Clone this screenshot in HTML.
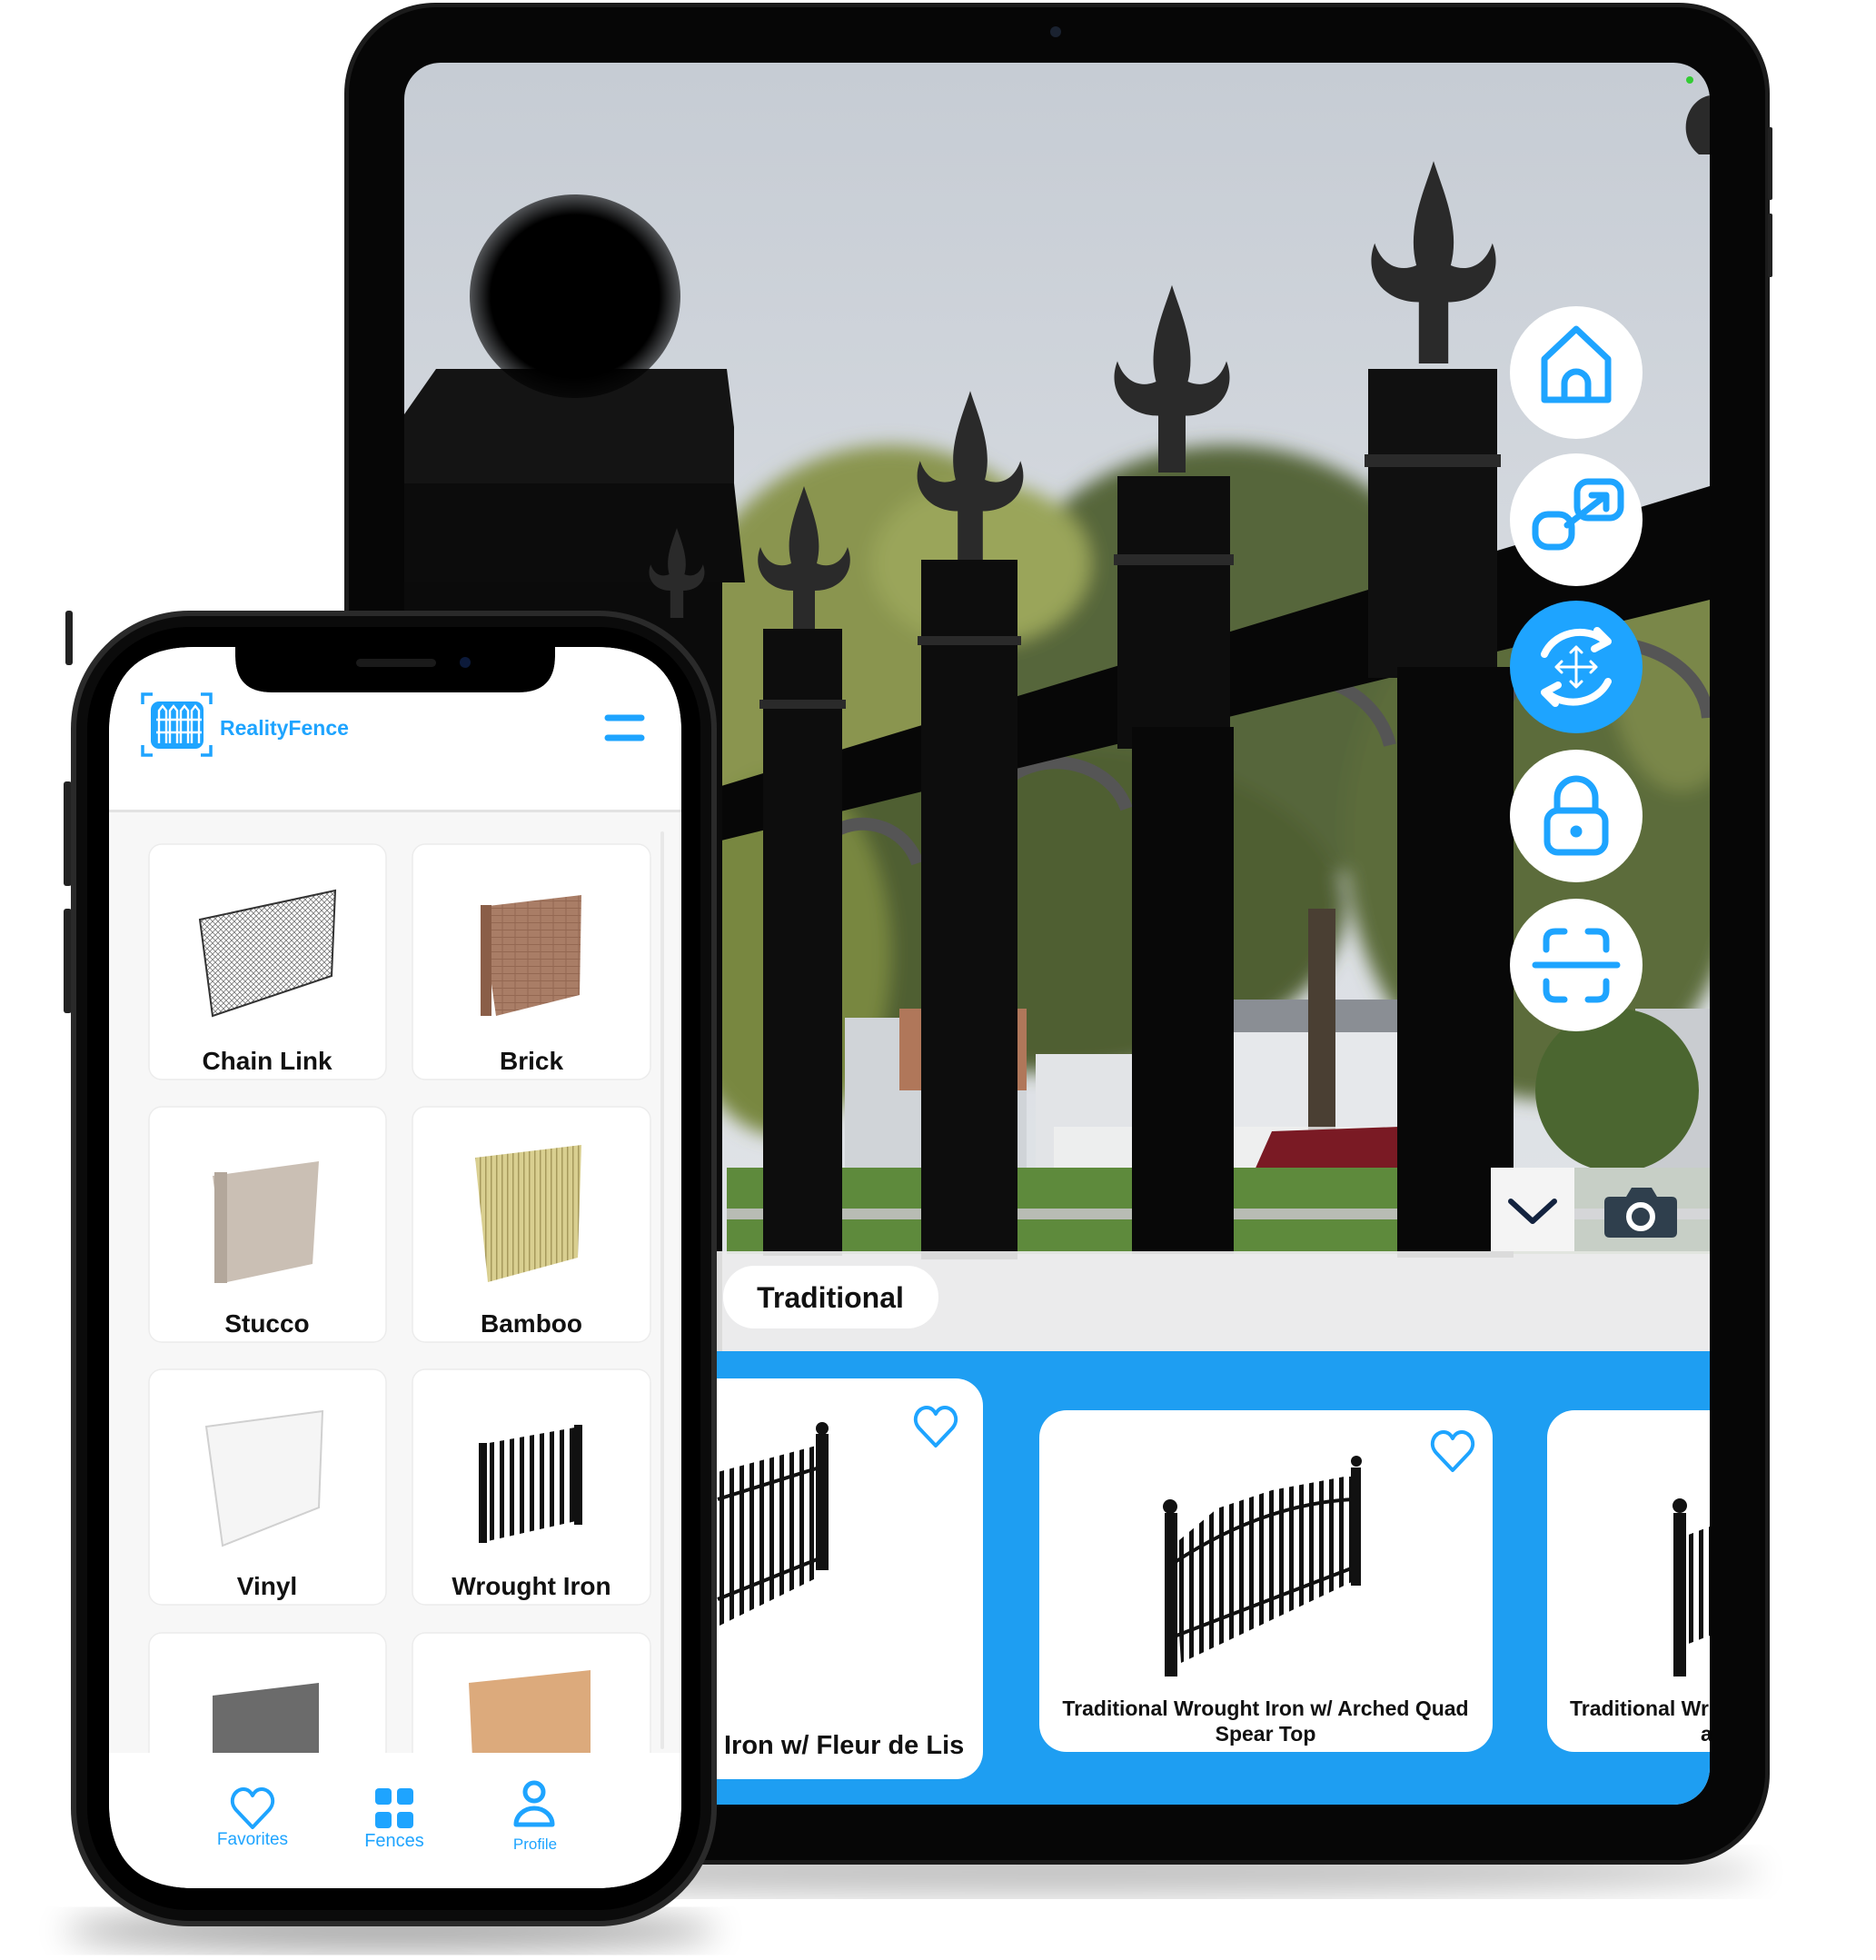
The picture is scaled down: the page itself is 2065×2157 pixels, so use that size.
<!DOCTYPE html>
<html><head><meta charset="utf-8"><style>
html,body{margin:0;padding:0;background:#fff;}
svg{display:block}
text{font-family:"Liberation Sans",sans-serif;}
</style></head><body>
<svg width="2065" height="2157" viewBox="0 0 2065 2157" xmlns="http://www.w3.org/2000/svg">
<defs>
<clipPath id="ipadScr"><rect x="445" y="69" width="1437" height="1917" rx="40"/></clipPath>
<clipPath id="phoneScr"><path d="M215 712 H259 V722 Q259 762 299 762 H571 Q611 762 611 722 V712 H655 Q750 712 750 807 V1983 Q750 2078 655 2078 H215 Q120 2078 120 1983 V807 Q120 712 215 712 Z"/></clipPath>
<linearGradient id="sky" x1="0" y1="0" x2="0" y2="1">
<stop offset="0" stop-color="#c6ccd4"/><stop offset="0.4" stop-color="#dadee3"/><stop offset="1" stop-color="#e6e8eb"/></linearGradient>
<radialGradient id="ball" cx="0.5" cy="0.5" r="0.5"><stop offset="0.8" stop-color="#000"/><stop offset="1" stop-color="#000" stop-opacity="0.6"/></radialGradient>
<pattern id="bars" width="11" height="20" patternUnits="userSpaceOnUse"><rect width="5" height="20" fill="#111"/></pattern>
<pattern id="mesh" width="6" height="6" patternUnits="userSpaceOnUse"><path d="M0 0L6 6M6 0L0 6" stroke="#777" stroke-width="0.8"/></pattern>
<pattern id="bamboo" width="6" height="20" patternUnits="userSpaceOnUse"><rect width="6" height="20" fill="#d9cf90"/><rect width="1.5" height="20" fill="#a69a5c"/></pattern>
<pattern id="brick" width="14" height="8" patternUnits="userSpaceOnUse"><rect width="14" height="8" fill="#a97d66"/><path d="M0 7.5H14M7 0V7.5" stroke="#946852" stroke-width="1"/></pattern>
<g id="fin"><path d="M-12,0 L-12,-50 C-40,-50 -58,-72 -48,-98 C-42,-80 -28,-74 -14,-80 C-22,-110 -8,-140 0,-165 C8,-140 22,-110 14,-80 C28,-74 42,-80 48,-98 C58,-72 40,-50 12,-50 L12,0 Z" fill="#2a2a2a"/></g>
<path id="heart" d="M25 46 L7 27 C-2 17 5 4 15 4 C20 4 23 7 25 11 C27 7 30 4 35 4 C45 4 52 17 43 27 Z" fill="none" stroke="#1ea4ff" stroke-width="4" stroke-linejoin="round"/>
<filter id="blur"><feGaussianBlur stdDeviation="18"/></filter>
<filter id="soft"><feGaussianBlur stdDeviation="10"/></filter>
</defs>

<ellipse cx="1160" cy="2060" rx="780" ry="25" fill="#000" opacity="0.25" filter="url(#blur)"/>
<ellipse cx="430" cy="2125" rx="360" ry="22" fill="#000" opacity="0.35" filter="url(#blur)"/>

<rect x="379" y="3" width="1569" height="2049" rx="100" fill="#1b1b1b"/>
<rect x="384" y="8" width="1559" height="2039" rx="96" fill="#060606"/>
<rect x="1946" y="140" width="5" height="80" rx="2" fill="#222"/>
<rect x="1946" y="235" width="5" height="70" rx="2" fill="#222"/>
<circle cx="1162" cy="35" r="6" fill="#1a2230"/>
<g clip-path="url(#ipadScr)">
<rect x="445" y="69" width="1437" height="1917" fill="url(#sky)"/>
<g filter="url(#soft)">
<ellipse cx="980" cy="780" rx="250" ry="290" fill="#8a9550"/>
<ellipse cx="1350" cy="740" rx="270" ry="250" fill="#56663a"/>
<ellipse cx="1700" cy="920" rx="220" ry="290" fill="#5c6c3a"/>
<ellipse cx="1150" cy="1000" rx="330" ry="180" fill="#4f5e33"/>
<ellipse cx="860" cy="1050" rx="120" ry="200" fill="#78873f"/>
<ellipse cx="1850" cy="720" rx="80" ry="150" fill="#7a874a"/>
<ellipse cx="1080" cy="620" rx="120" ry="90" fill="#9aa55a"/>
</g>
<rect x="930" y="1120" width="200" height="170" fill="#d0d4d8"/>
<rect x="990" y="1110" width="140" height="90" fill="#b0775a"/>
<rect x="1140" y="1160" width="180" height="130" fill="#e2e4e7"/>
<rect x="1340" y="1130" width="240" height="160" fill="#e6e8eb"/>
<rect x="1320" y="1100" width="260" height="36" fill="#8a8e94"/>
<rect x="1800" y="1110" width="82" height="180" fill="#c9ccd0"/>
<ellipse cx="1780" cy="1200" rx="90" ry="90" fill="#4b6630"/>
<rect x="1440" y="1000" width="30" height="290" fill="#4a3f33"/>
<rect x="1160" y="1240" width="400" height="50" fill="#f0f0f0" opacity="0.8"/>
<path d="M1380 1290 L1400 1245 L1540 1240 L1565 1290 Z" fill="#7a1a24"/>
<rect x="800" y="1285" width="1082" height="95" fill="#5e8a3c"/>
<rect x="800" y="1330" width="1082" height="12" fill="#b8bcb4"/>
<g fill="none" stroke="#555" stroke-width="14">
<path d="M890 990 A60 60 0 0 1 1010 950"/>
<path d="M1085 930 A80 70 0 0 1 1240 890"/>
<path d="M1320 860 A90 80 0 0 1 1530 820"/>
<path d="M1655 800 A90 70 0 0 1 1880 790"/>
</g>
<polygon points="794,865 1882,535 1882,660 794,925" fill="#070707"/>
<polygon points="445,456 480,406 800,406 808,470 808,532 445,532" fill="#141414"/>
<polygon points="445,532 808,532 820,641 445,641" fill="#0c0c0c"/>
<rect x="445" y="641" width="350" height="900" fill="#0b0b0b"/>
<ellipse cx="633" cy="326" rx="116" ry="112" fill="url(#ball)"/>
<use href="#fin" transform="translate(745,680) scale(0.6)"/>
<use href="#fin" transform="translate(885,700) scale(1.0)"/>
<rect x="840" y="692" width="87" height="690" fill="#0d0d0d"/>
<rect x="836" y="770" width="95" height="10" fill="#2a2a2a"/>
<use href="#fin" transform="translate(1068,620) scale(1.15)"/>
<rect x="1014" y="616" width="106" height="770" fill="#0d0d0d"/>
<rect x="1010" y="700" width="114" height="10" fill="#2a2a2a"/>
<use href="#fin" transform="translate(1290,520) scale(1.25)"/>
<rect x="1230" y="524" width="124" height="300" fill="#0d0d0d"/>
<rect x="1246" y="800" width="112" height="580" fill="#080808"/>
<rect x="1226" y="610" width="132" height="12" fill="#2a2a2a"/>
<use href="#fin" transform="translate(1578,400) scale(1.35)"/>
<rect x="1506" y="406" width="142" height="340" fill="#101010"/>
<rect x="1538" y="734" width="128" height="650" fill="#080808"/>
<rect x="1502" y="500" width="150" height="14" fill="#2a2a2a"/>
<path d="M1882 105 C1855 110 1845 150 1870 170 L1882 170 Z" fill="#2a2a2a"/>
<rect x="445" y="1377" width="1437" height="110" fill="#ececec" opacity="0.93"/>
<rect x="445" y="1487" width="1437" height="500" fill="#1e9ef2"/>
<rect x="1641" y="1285" width="92" height="92" fill="#f4f4f4"/>
<rect x="1733" y="1285" width="149" height="92" fill="#d9dbde" opacity="0.85"/>
<path d="M1663 1322 L1687 1344 L1711 1322" fill="none" stroke="#13233f" stroke-width="6" stroke-linecap="round" stroke-linejoin="round"/>
<path d="M1772 1317 H1790 L1796 1307 H1818 L1824 1317 H1840 Q1846 1317 1846 1323 V1356 Q1846 1362 1840 1362 H1772 Q1766 1362 1766 1356 V1323 Q1766 1317 1772 1317 Z" fill="#2f3f4d"/>
<circle cx="1806" cy="1339" r="13" fill="none" stroke="#fff" stroke-width="6"/>
<rect x="796" y="1393" width="237" height="69" rx="34" fill="#fff"/>
<text x="914" y="1439" text-anchor="middle" font-size="32" font-weight="bold" fill="#111">Traditional</text>
<rect x="760" y="1517" width="322" height="441" rx="30" fill="#fff"/>
<polygon points="790,1620 902,1590 902,1735 790,1790" fill="url(#bars)"/>
<path d="M790 1650 L902 1615 M790 1760 L902 1715" stroke="#111" stroke-width="4"/>
<rect x="898" y="1578" width="14" height="150" fill="#111"/>
<circle cx="905" cy="1572" r="7" fill="#111"/>
<use href="#heart" transform="translate(1005,1545)"/>
<text x="797" y="1930" font-size="29" font-weight="bold" fill="#111">Iron w/ Fleur de Lis</text>
<rect x="1144" y="1552" width="499" height="376" rx="30" fill="#fff"/>
<polygon points="1292,1700 1340,1660 1400,1640 1480,1625 1490,1625 1490,1740 1300,1830" fill="url(#bars)"/>
<path d="M1292 1720 Q1390 1655 1490 1650 M1295 1800 L1490 1725" fill="none" stroke="#111" stroke-width="4"/>
<rect x="1282" y="1665" width="14" height="180" fill="#111"/>
<circle cx="1288" cy="1658" r="8" fill="#111"/>
<rect x="1487" y="1615" width="11" height="130" fill="#111"/>
<circle cx="1493" cy="1608" r="6" fill="#111"/>
<use href="#heart" transform="translate(1574,1572)"/>
<text x="1393" y="1888" text-anchor="middle" font-size="23" font-weight="bold" fill="#111">Traditional Wrought Iron w/ Arched Quad</text>
<text x="1393" y="1916" text-anchor="middle" font-size="23" font-weight="bold" fill="#111">Spear Top</text>
<rect x="1703" y="1552" width="240" height="376" rx="30" fill="#fff"/>
<rect x="1842" y="1665" width="14" height="180" fill="#111"/>
<circle cx="1849" cy="1657" r="8" fill="#111"/>
<polygon points="1856,1690 1882,1680 1882,1800 1856,1810" fill="url(#bars)"/>
<text x="1728" y="1888" font-size="23" font-weight="bold" fill="#111">Traditional Wr</text>
<text x="1872" y="1916" font-size="23" font-weight="bold" fill="#111">a</text>
</g>
<g stroke="#1ea4ff" stroke-width="7" fill="none" stroke-linecap="round" stroke-linejoin="round">
<circle cx="1735" cy="410" r="73" fill="#fff" stroke="none"/>
<path d="M1700 440 V395 L1735 362 L1770 395 V440 Z"/>
<path d="M1722 440 V422 A13 13 0 0 1 1748 422 V440"/>
<circle cx="1735" cy="572" r="73" fill="#fff" stroke="none"/>
<rect x="1736" y="530" width="48" height="40" rx="12"/>
<rect x="1690" y="566" width="40" height="36" rx="14"/>
<path d="M1725 578 L1768 545 M1752 545 H1768 V560"/>
<circle cx="1735" cy="734" r="73" fill="#1ea4ff" stroke="none"/>
<path d="M1700 720 A42 38 0 0 1 1765 704 M1770 750 A42 38 0 0 1 1705 764" stroke="#fff" stroke-width="8"/>
<path d="M1758 694 L1770 706 L1755 714 M1712 774 L1700 762 L1715 754" stroke="#fff" stroke-width="8"/>
<path d="M1735 712 V756 M1713 734 H1757 M1729 718 L1735 712 L1741 718 M1729 750 L1735 756 L1741 750 M1719 728 L1713 734 L1719 740 M1751 728 L1757 734 L1751 740" stroke="#fff" stroke-width="3"/>
<circle cx="1735" cy="898" r="73" fill="#fff" stroke="none"/>
<rect x="1703" y="892" width="64" height="46" rx="12"/>
<path d="M1714 892 V878 A21 21 0 0 1 1756 878 V892"/>
<circle cx="1735" cy="915" r="3" fill="#1ea4ff"/>
<circle cx="1735" cy="1062" r="73" fill="#fff" stroke="none"/>
<path d="M1702 1045 V1035 Q1702 1025 1712 1025 H1722 M1748 1025 H1758 Q1768 1025 1768 1035 V1045 M1702 1080 V1090 Q1702 1100 1712 1100 H1722 M1768 1080 V1090 Q1768 1100 1758 1100 H1748 M1690 1062 H1780"/>
</g>
<circle cx="1860" cy="88" r="4" fill="#3c3"/>

<rect x="72" y="672" width="8" height="60" rx="3" fill="#222"/>
<rect x="70" y="860" width="9" height="115" rx="3" fill="#222"/>
<rect x="70" y="1000" width="9" height="115" rx="3" fill="#222"/>
<rect x="78" y="672" width="711" height="1448" rx="130" fill="#2a2a2a"/>
<rect x="84" y="678" width="699" height="1436" rx="125" fill="#0b0b0b"/>
<rect x="96" y="690" width="675" height="1412" rx="112" fill="#000"/>
<g clip-path="url(#phoneScr)">
<rect x="120" y="712" width="630" height="1366" fill="#f7f7f7"/>
<rect x="120" y="712" width="630" height="180" fill="#fff"/>
<rect x="120" y="891" width="630" height="3" fill="#e2e2e2"/>
<rect x="727" y="915" width="4" height="1010" rx="2" fill="#e8e8e8"/>
<g stroke="#1ea4ff" stroke-width="3.5" fill="none">
<path d="M157 775 V764 H168 M221 764 H232 V775 M157 820 V831 H168 M221 831 H232 V820"/>
</g>
<rect x="166" y="772" width="58" height="52" rx="9" fill="#1ea4ff"/>
<g stroke="#fff" stroke-width="2.4" fill="none">
<path d="M175 818 V782 L179 777 L183 782 V818 M187 818 V782 L191 777 L195 782 V818 M199 818 V782 L203 777 L207 782 V818 M211 818 V782 L215 777 L219 782 V818 M172 792 H222 M172 806 H222"/>
</g>
<text x="242" y="809" font-size="23" font-weight="bold" fill="#1ea4ff">RealityFence</text>
<path d="M669 790 H706 M669 812 H706" stroke="#1ea4ff" stroke-width="7" stroke-linecap="round"/>
<g fill="#fff" stroke="#ececec" stroke-width="1.5">
<rect x="164" y="929" width="261" height="259" rx="14"/>
<rect x="454" y="929" width="262" height="259" rx="14"/>
<rect x="164" y="1218" width="261" height="259" rx="14"/>
<rect x="454" y="1218" width="262" height="259" rx="14"/>
<rect x="164" y="1507" width="261" height="259" rx="14"/>
<rect x="454" y="1507" width="262" height="259" rx="14"/>
<rect x="164" y="1797" width="261" height="259" rx="14"/>
<rect x="454" y="1797" width="262" height="259" rx="14"/>
</g>
<polygon points="220,1012 369,980 365,1074 234,1118" fill="url(#mesh)" stroke="#333" stroke-width="2"/>
<polygon points="529,998 640,985 638,1095 546,1118" fill="url(#brick)"/>
<rect x="529" y="996" width="12" height="122" fill="#8a5e48"/>
<polygon points="234,1294 351,1278 344,1391 250,1411" fill="#cabfb4"/>
<rect x="236" y="1290" width="14" height="122" fill="#b3a79b"/>
<polygon points="523,1274 640,1260 636,1384 537,1411" fill="url(#bamboo)"/>
<polygon points="227,1570 355,1553 351,1659 245,1701" fill="#f5f5f5" stroke="#d0d0d0" stroke-width="2"/>
<polygon points="527,1590 638,1570 638,1673 537,1696" fill="url(#bars)"/>
<rect x="527" y="1588" width="9" height="110" fill="#111"/>
<rect x="632" y="1568" width="9" height="110" fill="#111"/>
<polygon points="234,1866 351,1852 351,1935 234,1935" fill="#6b6b6b"/>
<polygon points="516,1852 650,1838 650,1935 520,1935" fill="#dcaa7c"/>
<g font-size="28" font-weight="bold" fill="#111" text-anchor="middle">
<text x="294" y="1177">Chain Link</text>
<text x="585" y="1177">Brick</text>
<text x="294" y="1466">Stucco</text>
<text x="585" y="1466">Bamboo</text>
<text x="294" y="1755">Vinyl</text>
<text x="585" y="1755">Wrought Iron</text>
</g>
<rect x="120" y="1929" width="630" height="150" fill="#fff"/>
<use href="#heart" transform="translate(253,1965) scale(1.0)"/>
<g fill="#1ea4ff">
<rect x="413" y="1968" width="18" height="18" rx="4"/>
<rect x="437" y="1968" width="18" height="18" rx="4"/>
<rect x="413" y="1994" width="18" height="18" rx="4"/>
<rect x="437" y="1994" width="18" height="18" rx="4"/>
</g>
<circle cx="588" cy="1972" r="10" fill="none" stroke="#1ea4ff" stroke-width="5"/>
<path d="M568 2008 A20 18 0 0 1 608 2008 Z" fill="none" stroke="#1ea4ff" stroke-width="5" stroke-linejoin="round"/>
<g fill="#1ea4ff" text-anchor="middle">
<text x="278" y="2030" font-size="19">Favorites</text>
<text x="434" y="2032" font-size="20">Fences</text>
<text x="589" y="2035" font-size="17">Profile</text>
</g>
</g>
<rect x="392" y="725" width="88" height="9" rx="4.5" fill="#1a1a1a"/>
<circle cx="512" cy="729" r="6" fill="#0c1a3a"/>
</svg>
</body></html>
